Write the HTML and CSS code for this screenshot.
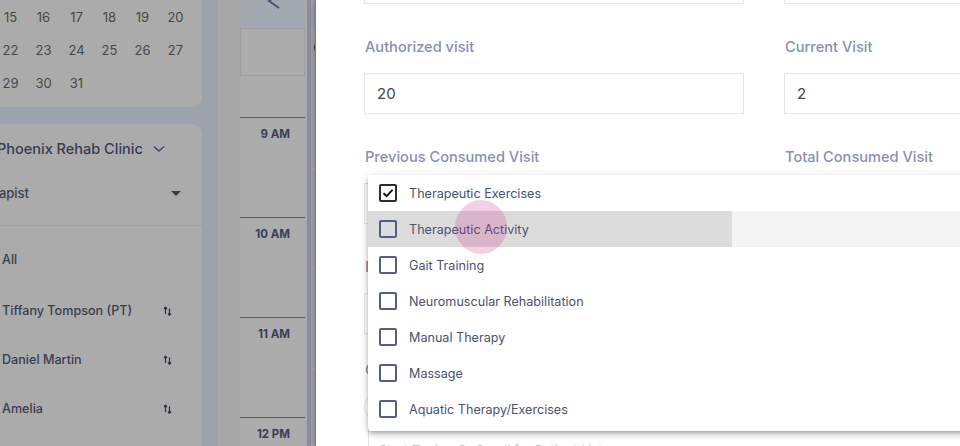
FILE: index.html
```html
<!DOCTYPE html>
<html lang="en">
<head>
<meta charset="utf-8">
<title>Scheduler – Add Appointment</title>
<link rel="stylesheet" href="styles.css">
</head>
<body>
<div class="app">
  <aside class="sidebar">
    <section class="card cal-card">
      <div class="cal-grid">
        <span>14</span><span>15</span><span>16</span><span>17</span><span>18</span><span>19</span><span>20</span>
        <span>21</span><span>22</span><span>23</span><span>24</span><span>25</span><span>26</span><span>27</span>
        <span>28</span><span>29</span><span>30</span><span>31</span>
      </div>
    </section>
    <section class="card filter-card">
      <div class="clinic">
        <span>Phoenix Rehab Clinic</span>
        <svg class="chev" width="12" height="8" viewBox="0 0 12 8"><path d="M1 1.5 L6 6 L11 1.5" fill="none" stroke="#3f4a78" stroke-width="1.6"/></svg>
      </div>
      <div class="select">
        <span class="select-text">Therapist</span>
        <span class="caret"></span>
      </div>
      <ul class="therapists">
        <li class="all">All</li>
        <li><span class="name">Tiffany Tompson (PT)</span><svg class="sort" width="10" height="10" viewBox="0 0 10 10"><path d="M2.5 8 V1.5 M1 3 L2.5 1.2 L4 3" fill="none" stroke="#2c3145" stroke-width="1.2"/><path d="M6.5 2.5 V9 M5 7.5 L6.5 9.3 L8 7.5" fill="none" stroke="#2c3145" stroke-width="1.2"/></svg></li>
        <li><span class="name">Daniel Martin</span><svg class="sort" width="10" height="10" viewBox="0 0 10 10"><path d="M2.5 8 V1.5 M1 3 L2.5 1.2 L4 3" fill="none" stroke="#2c3145" stroke-width="1.2"/><path d="M6.5 2.5 V9 M5 7.5 L6.5 9.3 L8 7.5" fill="none" stroke="#2c3145" stroke-width="1.2"/></svg></li>
        <li><span class="name">Amelia</span><svg class="sort" width="10" height="10" viewBox="0 0 10 10"><path d="M2.5 8 V1.5 M1 3 L2.5 1.2 L4 3" fill="none" stroke="#2c3145" stroke-width="1.2"/><path d="M6.5 2.5 V9 M5 7.5 L6.5 9.3 L8 7.5" fill="none" stroke="#2c3145" stroke-width="1.2"/></svg></li>
      </ul>
    </section>
  </aside>

  <main class="schedule">
    <div class="gutter"></div>
    <div class="timecol">
      <div class="head">
        <svg class="prev" width="20" height="20" viewBox="0 0 20 20"><path d="M15 -6 L5 1 L15 8" fill="none" stroke="#4a5070" stroke-width="2"/></svg>
      </div>
      <div class="allday"></div>
      <div class="spacer"></div>
      <div class="hour">9 AM</div>
      <div class="hour">10 AM</div>
      <div class="hour">11 AM</div>
      <div class="hour">12 PM</div>
    </div>
    <div class="sep"></div>
    <div class="divider"></div>
    <div class="nextcol">
      <div class="nexthead"></div>
      <div class="nextallday"><span class="avatar"></span></div>
      <div class="nextbody"></div>
    </div>
  </main>

  <div class="drawer">
    <form class="form-grid">
      <div class="field">
        <div class="input"></div>
      </div>
      <div class="field">
        <div class="input"></div>
      </div>
      <div class="field">
        <label class="label">Authorized visit</label>
        <div class="input">20</div>
      </div>
      <div class="field">
        <label class="label">Current Visit</label>
        <div class="input">2</div>
      </div>
      <div class="field">
        <label class="label">Previous Consumed Visit</label>
        <div class="input"></div>
      </div>
      <div class="field">
        <label class="label">Total Consumed Visit</label>
        <div class="input"></div>
      </div>
      <div class="field">
        <label class="label">Frequency</label>
        <div class="input"></div>
      </div>
      <div class="field">
        <label class="label">Duration</label>
        <div class="input"></div>
      </div>
      <div class="field wide">
        <label class="label label-tight">Case</label>
        <div class="pill"></div>
        <div class="patient">Start Typing Or Scroll for Patient List</div>
      </div>
    </form>

    <div class="menu">
      <div class="item">
        <span class="box checked"><svg width="14" height="14" viewBox="0 0 14 14"><path d="M2.5 7.2 L5.6 10.2 L11.5 3.8" fill="none" stroke="#111" stroke-width="1.9"/></svg></span>
        <span class="text">Therapeutic Exercises</span>
      </div>
      <div class="item hover">
        <span class="ripple-bg"></span>
        <span class="ripple-dot"></span>
        <span class="box"></span>
        <span class="text">Therapeutic Activity</span>
      </div>
      <div class="item"><span class="box"></span><span class="text">Gait Training</span></div>
      <div class="item"><span class="box"></span><span class="text">Neuromuscular Rehabilitation</span></div>
      <div class="item"><span class="box"></span><span class="text">Manual Therapy</span></div>
      <div class="item"><span class="box"></span><span class="text">Massage</span></div>
      <div class="item"><span class="box"></span><span class="text">Aquatic Therapy/Exercises</span></div>
    </div>
  </div>
</div>
</body>
</html>
```

FILE: styles.css
```css
* { box-sizing: border-box; margin: 0; padding: 0; }
html, body { width: 960px; height: 446px; overflow: hidden; }
body {
  font-family: Inter, "Open Sans", "Liberation Sans", sans-serif;
  background: #9ea2ab;
}
.app { display: flex; height: 446px; }

/* ---------- sidebar (dimmed) ---------- */
.sidebar {
  width: 218px;
  flex: none;
  padding-right: 16px;
  display: flex;
  flex-direction: column;
  gap: 17px;
  background: #9ea2ab;
  overflow: hidden;
}
.card { background: #ababab; width: 202px; }
.cal-card { height: 107px; flex: none; border-bottom-right-radius: 10px; overflow: hidden; }
.cal-grid {
  display: grid;
  grid-template-columns: repeat(7, 33px);
  grid-auto-rows: 33px;
  margin-left: -39px;
  font-size: 13px;
  color: #474747;
}
.cal-grid span { display: flex; align-items: center; justify-content: center; }

.filter-card { flex: 1; border-top-right-radius: 10px; overflow: hidden; }
.clinic {
  display: flex;
  align-items: center;
  gap: 10px;
  margin-top: 14px;
  height: 20px;
  margin-left: -3px;
  font-size: 14.5px;
  font-weight: 500;
  color: #373b50;
  white-space: nowrap;
}
.chev { flex: none; margin-top: 1px; }
.select {
  display: flex;
  align-items: center;
  justify-content: space-between;
  margin-top: 25px;
  height: 20px;
  padding-right: 21px;
  font-size: 13px;
  font-weight: 500;
  color: #3c3f4d;
  white-space: nowrap;
  border-bottom: 1px solid #a0a0a0;
  box-sizing: content-box;
  padding-bottom: 22px;
}
.select-text { margin-left: -30px; }
.caret {
  width: 0; height: 0;
  border-left: 5px solid transparent;
  border-right: 5px solid transparent;
  border-top: 5px solid #3c3c3c;
}
.therapists { list-style: none; padding-top: 6px; }
.therapists li {
  display: flex;
  align-items: center;
  height: 49px;
  padding-left: 2px;
  font-size: 12.6px;
  font-weight: 500;
  color: #393d50;
  white-space: nowrap;
}
.therapists li.all { height: 54px; }
.therapists .name { width: 161px; }

/* ---------- schedule (dimmed) ---------- */
.schedule { display: flex; flex: none; width: 98px; height: 446px; }
.gutter { width: 22px; background: #a8a8a8; }
.timecol { width: 65px; background: #acacac; display: flex; flex-direction: column; overflow: hidden; }
.head { height: 28px; flex: none; background: #a4a8b1; position: relative; overflow: hidden; }
.head .prev { position: absolute; left: 24px; top: 0; }
.allday { height: 48px; flex: none; border: 1px solid #9f9f9f; }
.spacer { height: 41px; flex: none; }
.hour {
  height: 100px;
  flex: none;
  border-top: 1px solid #585c70;
  padding-top: 9px;
  padding-right: 15px;
  text-align: right;
  font-size: 11.5px;
  font-weight: 700;
  line-height: 14px;
  color: #3b3f55;
}
.sep { width: 2px; background: #a9a9a9; }
.divider { width: 4px; background: #8b8fa6; }
.nextcol { width: 5px; display: flex; flex-direction: column; overflow: hidden; }
.nexthead { height: 28px; flex: none; background: #a4a8b1; }
.nextallday { height: 48px; flex: none; background: #ababab; position: relative; }
.avatar {
  position: absolute; left: 3px; top: 12px;
  width: 14px; height: 14px; border-radius: 50%;
  border: 2px solid #3a3a3a;
}
.nextbody {
  flex: 1;
  background: #ababab repeating-linear-gradient(to bottom, transparent 0 92px, #b5b5b5 92px 93px, transparent 93px 100px);
}

/* ---------- drawer ---------- */
.drawer {
  flex: 1;
  position: relative;
  background: #fff;
  overflow: hidden;
  box-shadow: -1px 0 0 #7c7c7c, -3px 0 5px rgba(0,0,0,0.25);
}
.form-grid {
  display: grid;
  grid-template-columns: 380px 380px;
  column-gap: 40px;
  margin-top: -37px;
  padding-left: 48px;
}
.label {
  display: block;
  margin-top: 33px;
  margin-bottom: 16px;
  margin-left: 1px;
  height: 20px;
  line-height: 20px;
  font-size: 14.6px;
  font-weight: 500;
  color: #8790b4;
  white-space: nowrap;
}
.input {
  height: 41px;
  border: 1px solid #e6e6e6;
  padding-left: 12px;
  display: flex;
  align-items: center;
  font-size: 15px;
  color: #474747;
}
.field.wide { grid-column: 1 / 3; }
.label-tight { margin-top: 26px; margin-bottom: 12px; }
.pill { height: 30px; border: 1px solid #e6e6e6; border-radius: 16px; width: 380px; }
.patient {
  margin-top: 7px;
  margin-left: 4px;
  height: 40px;
  border-left: 1px solid #e2e2e2;
  padding: 13px 10px;
  font-size: 13px;
  color: #c4c4c4;
}

/* ---------- dropdown menu ---------- */
.menu {
  position: absolute;
  left: 52px;
  top: 175px;
  width: 640px;
  padding-bottom: 4px;
  background: #fff;
  border-radius: 4px;
  box-shadow: 0 2px 4px -1px rgba(0,0,0,0.25), 0 4px 6px rgba(0,0,0,0.14), 0 1px 10px rgba(0,0,0,0.1);
}
.item {
  height: 36px;
  display: flex;
  align-items: center;
  gap: 12px;
  padding-left: 11px;
  font-size: 12.6px;
  color: #4b5170;
  white-space: nowrap;
}
.item.hover { position: relative; z-index: 0; background: #f4f4f4; }
.ripple-bg { position: absolute; left: 0; top: 0; width: 364px; height: 36px; background: #dcdcdc; z-index: -1; }
.ripple-dot {
  position: absolute; left: 87px; top: -11px;
  width: 52px; height: 54px; border-radius: 50%;
  background: rgba(205, 60, 140, 0.24);
  z-index: 1;
}
.box {
  flex: none;
  width: 18px; height: 18px;
  border: 2px solid #565c8a;
  border-radius: 2px;
  display: flex; align-items: center; justify-content: center;
}
.box.checked { border-color: #3d2334; }
```
